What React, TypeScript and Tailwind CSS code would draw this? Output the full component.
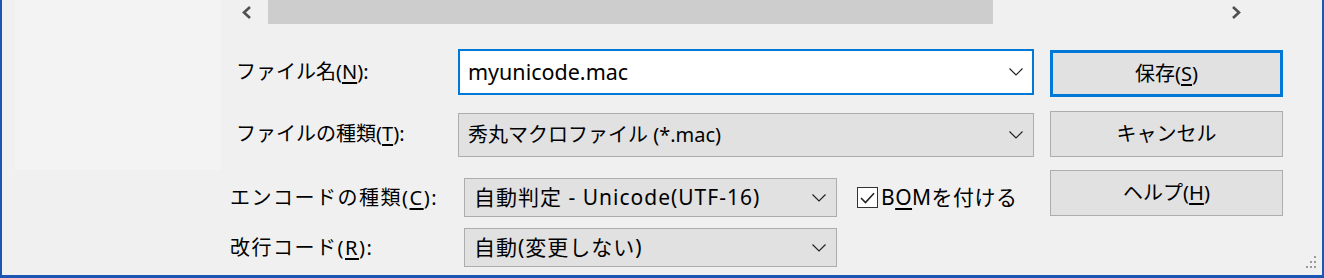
import type { ReactNode } from 'react'

const FONT = "font-['Noto_Sans','Noto_Sans_CJK_JP',sans-serif]"

function Chevron() {
  return (
    <svg width="14" height="8" viewBox="0 0 14 8" className="shrink-0">
      <path d="M0.5 0.5 L7 7 L13.5 0.5" fill="none" stroke="#222" strokeWidth="1.2" />
    </svg>
  )
}

function Combo({ width, height, active, children }: { width: string; height: string; active?: boolean; children: ReactNode }) {
  return (
    <div
      className={`flex shrink-0 items-center justify-between ${width} ${height} ${
        active ? 'border-2 border-[#0078d7] bg-white pl-[8px] pr-[9px]' : 'border border-[#adadad] bg-[#e1e1e1] pl-[9px] pr-[10px]'
      }`}
    >
      <span className="whitespace-nowrap">{children}</span>
      <Chevron />
    </div>
  )
}

function Button({ height, primary, children }: { height: string; primary?: boolean; children: ReactNode }) {
  return (
    <div
      className={`ml-[16px] flex w-[233px] shrink-0 items-center justify-center bg-[#e1e1e1] ${height} ${
        primary ? 'mt-[1px] border-[3px] border-[#0078d7]' : 'border border-[#adadad]'
      }`}
    >
      {children}
    </div>
  )
}

const U = ({ c }: { c: string }) => <span className="underline underline-offset-[3px]">{c}</span>

export default function App() {
  return (
    <div className={`relative flex h-[278px] w-[1324px] overflow-hidden border-b-[3px] border-l-2 border-r-2 border-[#1c56b2] bg-[#f0f0f0] text-[20px] leading-none text-black ${FONT}`}>
      {/* navigation pane remnant */}
      <div className="w-[219px] shrink-0 pl-[13px]">
        <div className="h-[170px] w-[206px] bg-[#f3f3f3]" />
      </div>

      <div className="flex flex-1 flex-col">
        {/* horizontal scroll bar */}
        <div className="flex h-[24px] w-[1039px] items-center">
          <div className="flex h-full w-[47px] items-center justify-center pl-[4px]">
            <svg width="13" height="13" viewBox="0 0 13 13">
              <path d="M10 1 L4 6.5 L10 12" fill="none" stroke="#505050" strokeWidth="2.6" />
            </svg>
          </div>
          <div className="h-full w-[725px] bg-[#cdcdcd]" />
          <div className="flex-1" />
          <div className="flex h-full w-[47px] items-center justify-center">
            <svg width="13" height="13" viewBox="0 0 13 13">
              <path d="M3 1 L9 6.5 L3 12" fill="none" stroke="#505050" strokeWidth="2.6" />
            </svg>
          </div>
        </div>

        {/* file name */}
        <div className="mt-[25px] flex h-[48px] items-start">
          <div className="flex h-[46px] w-[237px] shrink-0 items-center pl-[15px]">
            ファイル名(<U c="N" />):
          </div>
          <Combo width="w-[576px]" height="h-[46px]" active>
            <span className="text-[21.5px]">myunicode.mac</span>
          </Combo>
          <Button height="h-[47px]" primary>
            保存(<U c="S" />)
          </Button>
        </div>

        {/* file type */}
        <div className="mt-[14px] flex h-[46px] items-start">
          <div className="flex h-[46px] w-[237px] shrink-0 items-center pl-[15px]">
            ファイルの種類(<U c="T" />):
          </div>
          <div className="mt-[2px]">
            <Combo width="w-[576px]" height="h-[44px]">
              秀丸マクロファイル (*.mac)
            </Combo>
          </div>
          <Button height="h-[46px]">キャンセル</Button>
        </div>

        {/* encoding */}
        <div className="mt-[13px] flex h-[47px] items-start">
          <div className="flex h-[47px] w-[243px] shrink-0 items-center whitespace-nowrap pl-[9px] pt-[8px] tracking-[1.5px]">
            エンコードの種類(<U c="C" />):
          </div>
          <div className="mt-[8px]">
            <Combo width="w-[373px]" height="h-[39px]">
              <span className="text-[21px] tracking-[1px]">自動判定 - Unicode(UTF-16)</span>
            </Combo>
          </div>
          <div className="mt-[8px] flex h-[39px] w-[197px] shrink-0 items-center pl-[20px]">
            <div className="box-border flex h-[21px] w-[21px] min-w-[21px] shrink-0 items-center justify-center border-[1.5px] border-[#333] bg-white">
              <svg width="15" height="12" viewBox="0 0 15 12" className="shrink-0">
                <path d="M1 6 L5.5 10.5 L14 1.2" fill="none" stroke="#222" strokeWidth="1.6" />
              </svg>
            </div>
            <span className="ml-[3px] whitespace-nowrap text-[21px] tracking-[0.5px]">
              B<U c="O" />Mを付ける
            </span>
          </div>
          <Button height="h-[46px]">
            ヘルプ(<U c="H" />)
          </Button>
        </div>

        {/* line ending */}
        <div className="mt-[11px] flex h-[39px] items-start">
          <div className="flex h-[39px] w-[243px] shrink-0 items-center whitespace-nowrap pl-[9px] tracking-[1.5px]">
            改行コード(<U c="R" />):
          </div>
          <Combo width="w-[373px]" height="h-[39px]">
            <span className="text-[21px] tracking-[1px]">自動(変更しない)</span>
          </Combo>
        </div>
      </div>

      {/* size grip */}
      <svg width="16" height="16" viewBox="0 0 16 16" className="absolute bottom-[4px] right-[4px]">
        <g fill="#9a9a9a">
          <rect x="12" y="1" width="2" height="2" />
          <rect x="8" y="6" width="2" height="2" />
          <rect x="12" y="6" width="2" height="2" />
          <rect x="4" y="11" width="2" height="2" />
          <rect x="8" y="11" width="2" height="2" />
          <rect x="12" y="11" width="2" height="2" />
        </g>
      </svg>
    </div>
  )
}
